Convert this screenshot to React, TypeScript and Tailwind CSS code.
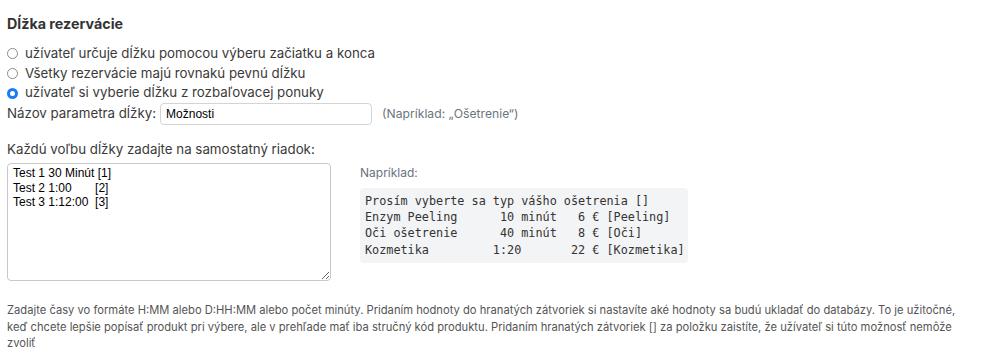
import React from "react";

const options = [
  { label: "užívateľ určuje dĺžku pomocou výberu začiatku a konca", checked: false },
  { label: "Všetky rezervácie majú rovnakú pevnú dĺžku", checked: false },
  { label: "užívateľ si vyberie dĺžku z rozbaľovacej ponuky", checked: true },
];

const example = [
  "Prosím vyberte sa typ vášho ošetrenia []",
  "Enzym Peeling      10 minút   6 € [Peeling]",
  "Oči ošetrenie      40 minút   8 € [Oči]",
  "Kozmetika         1:20       22 € [Kozmetika]",
];

const App = () => {
  return (
    <div className="px-[7px] pt-[14px] font-['Inter'] text-[#333] bg-white min-h-[361px]">
      <h3 className="text-[14.3px] font-bold leading-[20px] text-[#333]">Dĺžka rezervácie</h3>

      <div className="mt-[10px]">
        {options.map((o) => (
          <label key={o.label} className="flex items-center gap-[7px] h-[19.7px] text-[13.3px] text-[#3a3a3a]">
            <input
              type="radio"
              name="dlzka"
              defaultChecked={o.checked}
              className="appearance-none m-0 w-[11px] min-w-[11px] h-[11px] rounded-full border border-[#8a8a8a] bg-white checked:border-[3.5px] checked:border-[#1a7cf5]"
            />
            <span>{o.label}</span>
          </label>
        ))}
        <div className="flex items-center h-[22px] text-[13.3px] text-[#3a3a3a]">
          <span>Názov parametra dĺžky:</span>
          <input
            defaultValue="Možnosti"
            className="ml-[4px] w-[212px] h-[22px] border border-[#d4d4d4] rounded-[4px] px-[5px] text-[12px] text-black font-['Liberation_Sans'] outline-none"
          />
          <span className="ml-[10px] text-[12.2px] text-[#6c757d]">(Napríklad: „Ošetrenie“)</span>
        </div>
      </div>

      <p className="mt-[14px] text-[13.3px] leading-[20px] text-[#3a3a3a]">Každú voľbu dĺžky zadajte na samostatný riadok:</p>

      <div className="flex mt-[4px] gap-[29px]">
        <textarea
          defaultValue={"Test 1 30 Minút [1]\nTest 2 1:00       [2]\nTest 3 1:12:00  [3]"}
          className="w-[324px] h-[118px] border border-[#c8c8c8] rounded-[4px] px-[5px] py-[2px] text-[12px] leading-[14.5px] text-black font-['Liberation_Sans'] outline-none"
        />
        <div className="pt-[1px]">
          <div className="text-[12px] leading-[18px] text-[#6b7280]">Napríklad:</div>
          <div className="mt-[6px] w-[328px] bg-[#f3f4f6] rounded-[4px] px-[5px] py-[5px] text-[11.8px] leading-[16.2px] text-[#333] font-['DejaVu_Sans_Mono'] whitespace-pre">
            {example.map((l) => (
              <div key={l}>{l}</div>
            ))}
          </div>
        </div>
      </div>

      <p className="mt-[21px] text-[11.2px] leading-[16.5px] text-[#555]">
        Zadajte časy vo formáte H:MM alebo D:HH:MM alebo počet minúty. Pridaním hodnoty do hranatých zátvoriek si nastavíte aké hodnoty sa budú ukladať do databázy. To je užitočné, keď chcete lepšie popísať produkt pri výbere, ale v prehľade mať iba stručný kód produktu. Pridaním hranatých zátvoriek [] za položku zaistíte, že užívateľ si túto možnosť nemôže zvoliť
      </p>
    </div>
  );
};

export default App;
